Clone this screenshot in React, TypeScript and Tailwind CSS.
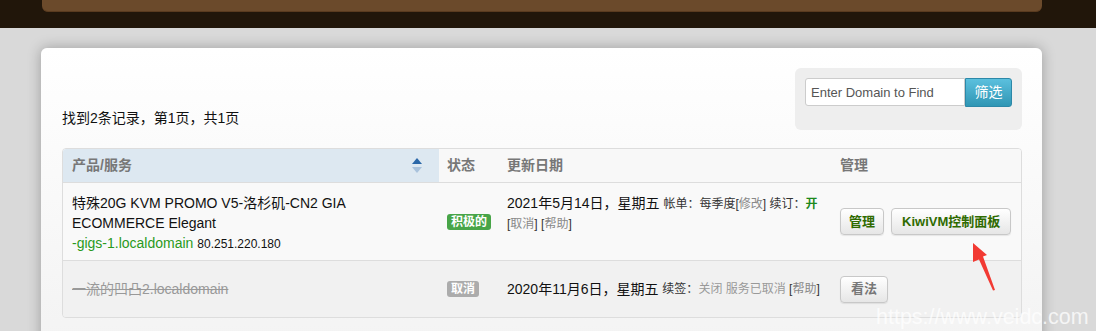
import React from "react";

const font = { fontFamily: '"Liberation Sans", Arial, "Noto Sans CJK SC", sans-serif' };

function SortIcon() {
  return (
    <svg width="10" height="16" viewBox="0 0 10 16" className="shrink-0">
      <path d="M5 0 L10 6 L0 6 Z" fill="#2a67a8" />
      <path d="M0 9 L10 9 L5 15 Z" fill="#a9c2dc" />
    </svg>
  );
}

function Badge({ label, tone }: { label: string; tone: "green" | "gray" }) {
  return (
    <span
      className={
        "inline-block rounded-[3px] px-[4px] text-[12px] leading-[16px] font-bold text-white " +
        (tone === "green" ? "bg-[#48a548]" : "bg-[#acacac]")
      }
    >
      {label}
    </span>
  );
}

function Btn({ label, muted, pad }: { label: string; muted?: boolean; pad: string }) {
  return (
    <button
      className={
        "h-[27px] rounded-[4px] border border-[#c8c8c8] bg-gradient-to-b from-white to-[#e6e6e6] text-[13px] font-bold shadow-[0_1px_1px_rgba(0,0,0,0.08)] " +
        pad +
        (muted ? " text-[#777]" : " text-[#2f6b00]")
      }
    >
      {label}
    </button>
  );
}

const cols = "grid grid-cols-[376px_59px_332px_191px]";

export default function App() {
  return (
    <div className="relative h-[331px] w-[1096px] overflow-hidden bg-[#d9d9d9]" style={font}>
      <div className="h-[28px] bg-[#21160a] pl-[42px]">
        <div className="h-[12px] w-[1000px] rounded-b-[6px] border-b border-[#5a3b1f] bg-[#6b4a2b]" />
      </div>

      <div className="ml-[41px] mt-[20px] h-[300px] w-[1001px] rounded-t-[6px] bg-gradient-to-b from-white to-[#f3f3f3] px-[20px] pt-[20px] shadow-[0_0_14px_rgba(0,0,0,0.28)]">
        <div className="flex items-end justify-between pl-[1px]">
          <div className="mb-[2px] text-[14px] leading-[20px] text-[#111]">找到2条记录，第1页，共1页</div>
          <div className="h-[62px] w-[227px] rounded-[6px] bg-[#eeeeee] px-[10px] pt-[10px]">
            <div className="flex">
              <input
                readOnly
                value="Enter Domain to Find"
                className="h-[28px] w-[160px] rounded-l-[3px] border border-[#ccc] bg-white px-[5px] text-[13px] text-[#555] outline-none"
                style={font}
              />
              <button className="h-[29px] w-[47px] rounded-r-[3px] border border-[#2c88a8] bg-gradient-to-b from-[#5bc0de] to-[#2f96b4] text-[14px] text-white">
                筛选
              </button>
            </div>
          </div>
        </div>

        <div className="ml-[1px] mt-[18px] w-[960px] overflow-hidden rounded-[4px] border border-[#dddddd] text-[14px]">
          <div className={cols + " h-[34px] border-b border-[#dddddd] bg-[#f8f8f8] font-bold text-[#777]"}>
            <div className="flex items-center justify-between bg-[#dde8f1] pl-[9px] pr-[17px]">
              <span>产品/服务</span>
              <SortIcon />
            </div>
            <div className="flex items-center pl-[8px]">状态</div>
            <div className="flex items-center pl-[9px]">更新日期</div>
            <div className="flex items-center pl-[10px]">管理</div>
          </div>

          <div className={cols + " h-[78px] border-b border-[#dddddd] bg-[#f9f9f9]"}>
            <div className="pl-[9px] pt-[10px] leading-[20px] text-[#111]">
              <div>特殊20G KVM PROMO V5-洛杉矶-CN2 GIA</div>
              <div>ECOMMERCE Elegant</div>
              <div>
                <span className="text-[#2a9a1c]">-gigs-1.localdomain</span>{" "}
                <span className="text-[12px] text-[#111]">80.251.220.180</span>
              </div>
            </div>
            <div className="flex items-center pl-[8px]">
              <Badge label="积极的" tone="green" />
            </div>
            <div className="pl-[9px] pt-[10px] leading-[20px] text-[#111]">
              <div>
                2021年5月14日，星期五{" "}
                <span className="text-[12px] text-[#333]">
                  帐单：每季度[<span className="text-[#888]">修改</span>] 续订：
                  <span className="font-bold text-[#1d8a1d]">开</span>
                </span>
              </div>
              <div className="text-[12px] text-[#333]">
                [<span className="text-[#888]">取消</span>] [<span className="text-[#888]">帮助</span>]
              </div>
            </div>
            <div className="flex items-center gap-[7px] pl-[10px]">
              <Btn label="管理" pad="px-[8px]" />
              <Btn label="KiwiVM控制面板" pad="px-[10px]" />
            </div>
          </div>

          <div className={cols + " h-[56px] bg-[#f1f1f1]"}>
            <div className="flex items-center pl-[9px] text-[#999] line-through">一流的凹凸2.localdomain</div>
            <div className="flex items-center pl-[8px]">
              <Badge label="取消" tone="gray" />
            </div>
            <div className="flex items-center pl-[9px] text-[#111]">
              2020年11月6日，星期五&nbsp;
              <span className="text-[12px] text-[#333]">
                续签：<span className="text-[#999]">关闭 服务已取消</span> [<span className="text-[#888]">帮助</span>]
              </span>
            </div>
            <div className="flex items-center pl-[10px]">
              <Btn label="看法" muted pad="px-[10px]" />
            </div>
          </div>
        </div>
      </div>

      <svg className="absolute left-[960px] top-[238px]" width="44" height="56" viewBox="0 0 44 56">
        <path d="M13 5 L27 17 L23 18.5 L35 52 L33 52.5 L19 21.5 L13 24 Z" fill="#f23a33" />
      </svg>

      <div className="absolute left-[876px] top-[304px] text-[21.5px] leading-[26px] text-white/75" style={font}>
        https://www.veidc.com
      </div>
    </div>
  );
}
